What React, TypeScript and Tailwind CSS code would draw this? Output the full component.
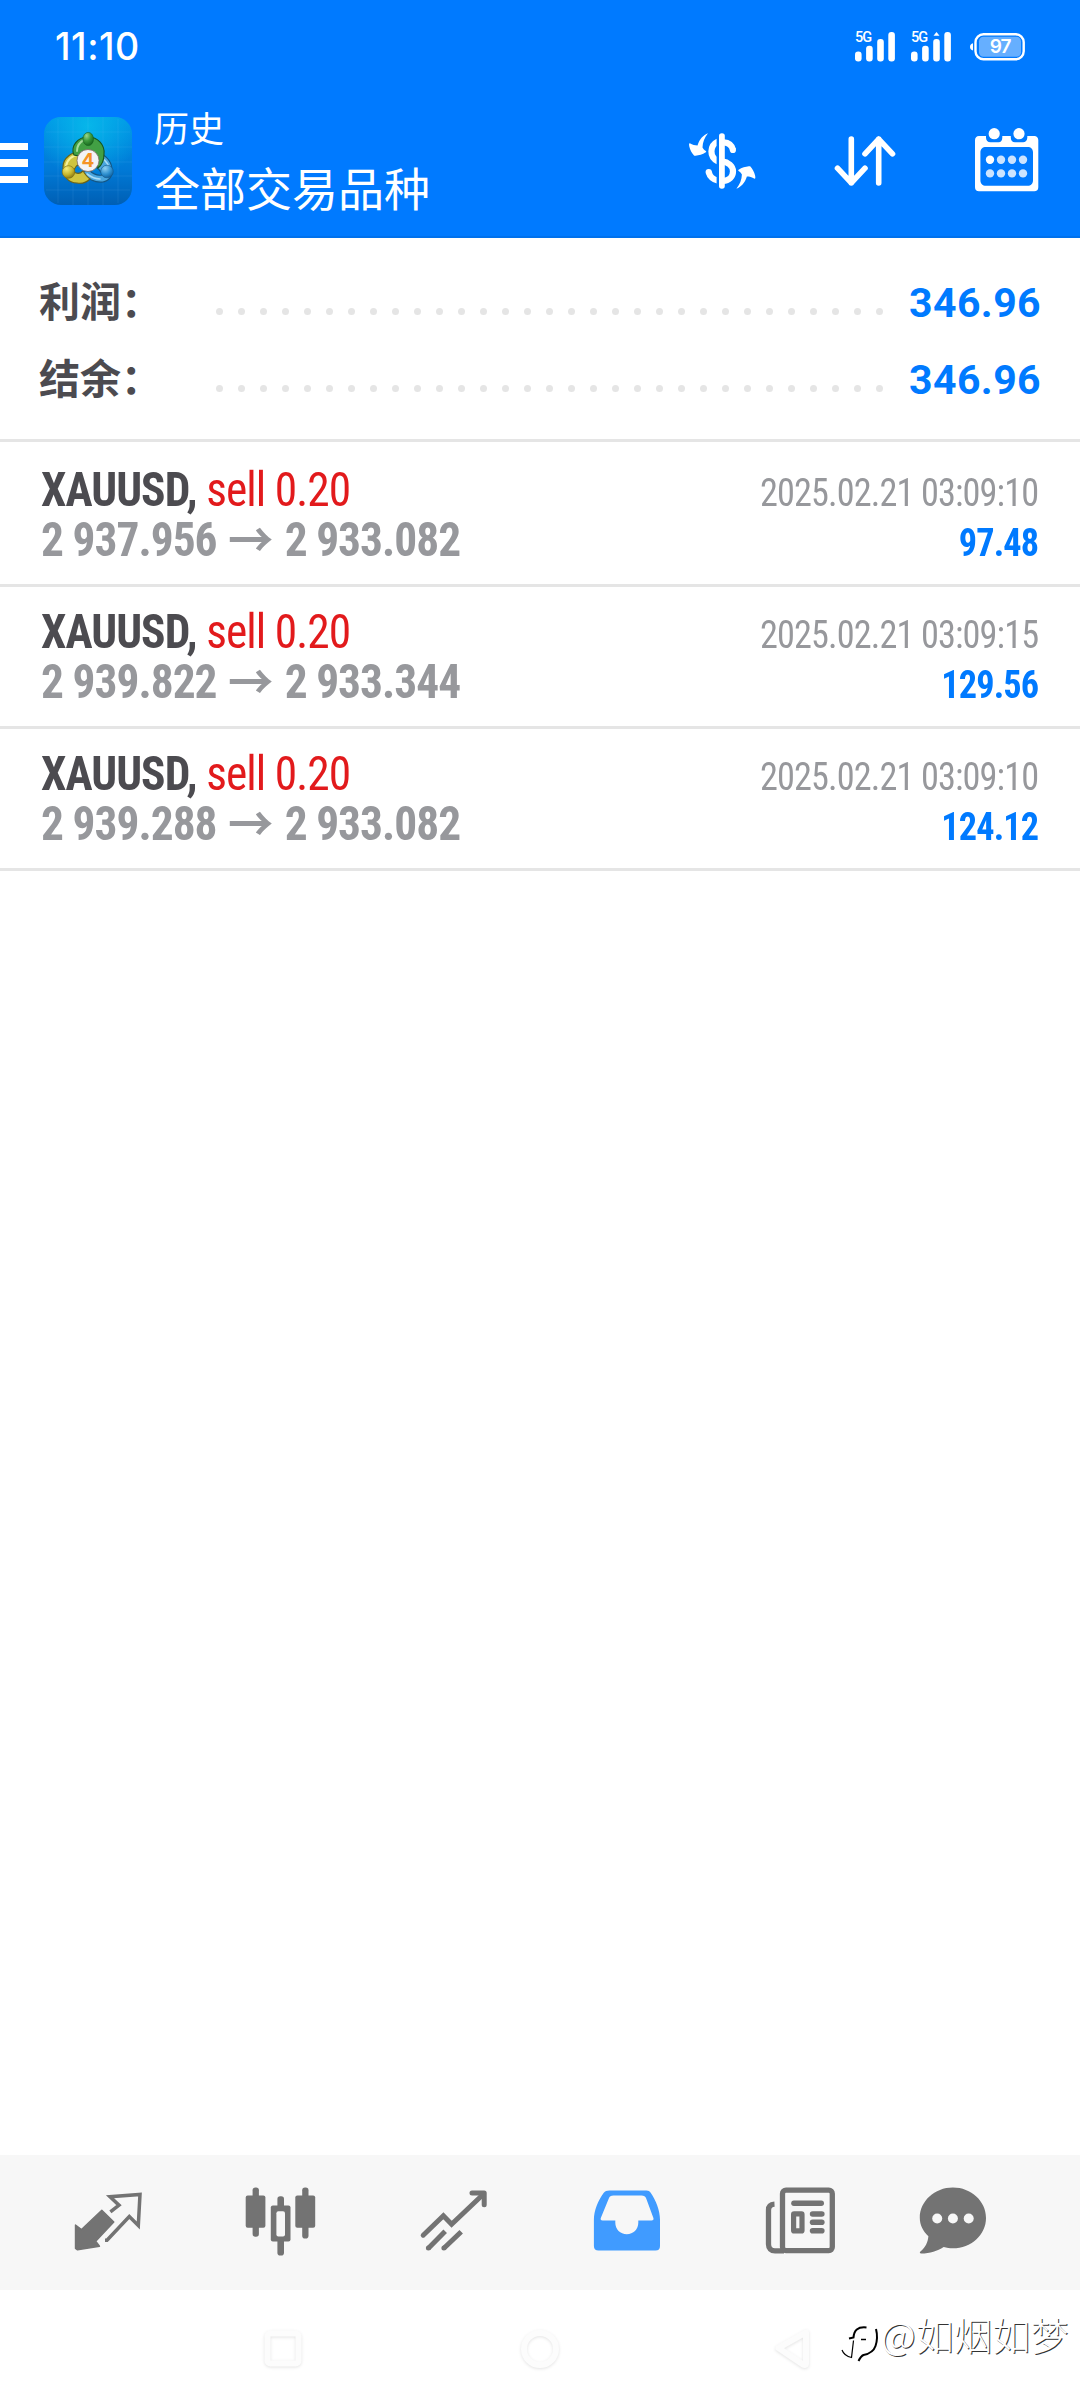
import type { ReactNode } from "react";

const summary = [
  { label: "利润：", value: "346.96" },
  { label: "结余：", value: "346.96" },
];

const deals = [
  {
    symbol: "XAUUSD",
    side: "sell 0.20",
    open: "2 937.956",
    close: "2 933.082",
    time: "2025.02.21 03:09:10",
    profit: "97.48",
  },
  {
    symbol: "XAUUSD",
    side: "sell 0.20",
    open: "2 939.822",
    close: "2 933.344",
    time: "2025.02.21 03:09:15",
    profit: "129.56",
  },
  {
    symbol: "XAUUSD",
    side: "sell 0.20",
    open: "2 939.288",
    close: "2 933.082",
    time: "2025.02.21 03:09:10",
    profit: "124.12",
  },
];

function Signal({ active = false }: { active?: boolean }) {
  return (
    <div className="relative w-10 h-[30px]">
      <svg viewBox="0 0 40 30" className="w-10 h-[30px]" fill="#fff">
        <rect x="0" y="19.5" width="6.6" height="10" rx="3.2" />
        <rect x="11.1" y="13.7" width="6.6" height="15.8" rx="3" />
        <rect x="22.2" y="7" width="6.6" height="22.5" rx="3" />
        <rect x="33.3" y="0" width="6.6" height="29.5" rx="3" />
        {active && <path d="M25.5 0l3 3.8h-6z" />}
      </svg>
      <span className="absolute left-0 -top-[3px] text-[14.5px] leading-[18px] font-medium tracking-[-1px] font-['Roboto']">
        5G
      </span>
    </div>
  );
}

function Battery() {
  return (
    <div className="relative w-[56px] h-7">
      <svg viewBox="0 0 56 28" className="w-[56px] h-7">
        <path d="M3 10.3v7.2C1.2 17 0 16 0 14s1.2-3.2 3-3.7z" fill="#fff" />
        <rect x="5.5" y="1.3" width="48.2" height="25" rx="8" fill="none" stroke="#fff" strokeWidth="2.4" />
        <rect x="9" y="3.8" width="42" height="20" rx="4.5" fill="#fff" fillOpacity="0.4" />
      </svg>
      <span className="absolute left-[2px] top-0 w-full text-center text-[19px] leading-7 font-semibold tracking-[-1px]">
        97
      </span>
    </div>
  );
}

function AppLogo() {
  return (
    <svg viewBox="0 0 88 88" className="w-[88px] h-[88px]">
      <defs>
        <linearGradient id="bg" x1="0" y1="0" x2="0" y2="1">
          <stop offset="0" stopColor="#0096e6" />
          <stop offset="0.6" stopColor="#0079d6" />
          <stop offset="1" stopColor="#005fb4" />
        </linearGradient>
        <radialGradient id="glow" cx="0.5" cy="0.1" r="0.6">
          <stop offset="0" stopColor="#06b6ea" />
          <stop offset="1" stopColor="#06b6ea" stopOpacity="0" />
        </radialGradient>
        <radialGradient id="green" cx="0.35" cy="0.25" r="0.8">
          <stop offset="0" stopColor="#9bd68c" />
          <stop offset="0.5" stopColor="#3c9a3d" />
          <stop offset="1" stopColor="#14651c" />
        </radialGradient>
        <radialGradient id="yellow" cx="0.35" cy="0.25" r="0.8">
          <stop offset="0" stopColor="#f5ee7a" />
          <stop offset="0.6" stopColor="#c5b42c" />
          <stop offset="1" stopColor="#857312" />
        </radialGradient>
        <radialGradient id="blue" cx="0.35" cy="0.25" r="0.8">
          <stop offset="0" stopColor="#8fd0f2" />
          <stop offset="0.6" stopColor="#2d8fcf" />
          <stop offset="1" stopColor="#0f5f9c" />
        </radialGradient>
      </defs>
      <rect width="88" height="88" rx="17" fill="url(#bg)" />
      <rect width="88" height="88" rx="17" fill="url(#glow)" />
      <path
        d="M14 2v84M29 0v88M44 0v88M59 0v88M74 2v84M2 15h84M0 30h88M0 45h88M0 59h88M2 73h84"
        stroke="#7fd0ff"
        strokeOpacity="0.14"
        strokeWidth="0.8"
      />
      {/* three figures holding the version badge */}
      <path d="M50 36c9-1 18 7 18 17 1 6-3 11-9 12-8 1-16-3-21-10l7-2c4 4 8 6 13 5-1-4-4-7-8-9z" fill="#4aa6de" stroke="#135583" strokeWidth="1.1" />
      <path d="M54 40c5 1 9 5 11 10M43 57c4 3 8 5 13 5" fill="none" stroke="#a9dcf6" strokeWidth="1.6" strokeLinecap="round" />
      <path d="M38 35c-10-1-19 6-19 15 0 9 5 16 14 16 5 1 10-1 13-4-3-2-5-5-7-8-3 3-6 3-9 1 0-5 4-8 9-10z" fill="#cfc43e" stroke="#6f6212" strokeWidth="1.1" />
      <path d="M35 38c-7 0-12 5-13 11" fill="none" stroke="#f6f09a" strokeWidth="2" strokeLinecap="round" />
      <path d="M30 38c-4-9 4-18 14-18s17 8 16 17c0 7-2 11-6 14l-2-8c1-5-2-10-8-10-5 0-8 2-9 6z" fill="#42a044" stroke="#17551d" strokeWidth="1.1" />
      <path d="M33 34c0-5 3-9 7-11" fill="none" stroke="#a5dc9c" strokeWidth="2" strokeLinecap="round" />
      <ellipse cx="44.2" cy="22" rx="5.3" ry="6.6" fill="url(#green)" stroke="#17601f" strokeWidth="0.6" />
      <circle cx="24.5" cy="55" r="6.3" fill="url(#yellow)" stroke="#7a6c14" strokeWidth="0.6" />
      <circle cx="63" cy="54.5" r="6.3" fill="url(#blue)" stroke="#14588a" strokeWidth="0.6" />
      <circle cx="44" cy="43.5" r="11" fill="#f3f3f5" stroke="#7f6a62" strokeWidth="0.8" />
      <text x="44" y="50.2" textAnchor="middle" className="font-['Inter'] text-[19px] font-bold" fill="#f59324">
        4
      </text>
    </svg>
  );
}

function CurrencyIcon() {
  return (
    <svg viewBox="0 0 76 76" className="w-[76px] h-[76px]">
      <g fill="none" stroke="#fff" strokeWidth="6.2">
        <path d="M34 17.500c-8.500 4-9 15.500 0 20" />
        <path d="M34 56.600C29.500 56 25.700 52.500 24.700 48" />
        <path d="M40 18.300c4.500 0.200 8 3 9 7.500" />
        <path d="M38 37.300c6 0.700 11 4.500 11 10s-4 9.500-10 9.700" />
      </g>
      <circle cx="24.7" cy="48" r="3.1" fill="#fff" />
      <circle cx="48.9" cy="26" r="3.1" fill="#fff" />
      <rect x="32.6" y="9.3" width="4" height="55.5" fill="#007aff" />
      <rect x="35" y="9.3" width="5.8" height="55.5" rx="2.8" fill="#fff" />
      <path
        id="swoosh"
        d="M24 9.300C19.500 11 15.500 15 13.500 21.500 11 21.500 8.500 21 5.800 19.300c-1 0-.8 1.500-.5 3.200.8 3.500 2.500 6.500 4.700 9 .5.500 1 .4 1.600.2 3.200-.5 7-1 10.200-3.500.5-.5.500-1 0-1.300-1.500-1-2.500-1.800-3.300-3.500.2-5 2-10 5.500-14.100z"
        fill="#fff"
      />
      <use href="#swoosh" transform="rotate(180 38.2 37)" />
    </svg>
  );
}

function SortIcon() {
  return (
    <svg
      viewBox="0 0 76 76"
      className="w-[76px] h-[76px]"
      fill="none"
      stroke="#fff"
      strokeWidth="5.6"
      strokeLinecap="round"
      strokeLinejoin="round"
    >
      <path d="M24.300 15v44M10.500 44.200l13.800 14.600 13.700-14.600" />
      <path d="M51.700 59V15M38 29.800l13.700-14.600 13.800 14.600" />
    </svg>
  );
}

function CalendarIcon() {
  return (
    <svg viewBox="0 0 76 76" className="w-[76px] h-[76px]" fill="#fff">
      <path
        fillRule="evenodd"
        d="M10 14h7v1.500c0 3 1.700 4.700 4.500 4.700h8c2.500 0 3.800-1.700 3.800-4.700V14h8.500v1.500c0 3 1.500 4.700 4.200 4.700h8c2.500 0 4.300-1.700 4.300-4.700V14h7c2.500 0 4 1.800 4 4.300v47c0 2.500-1.500 4-4 4H10c-2.500 0-4-1.500-4-4v-47C6 15.800 7.500 14 10 14zM17 25c-3.500 0-5.600 2-5.600 5.500v27.700c0 3.500 2.100 5.500 5.600 5.500h41.500c3.500 0 5.500-2 5.500-5.500V30.500c0-3.500-2-5.500-5.500-5.500z"
      />
      <circle cx="25.2" cy="11.7" r="5.6" />
      <circle cx="50" cy="11.7" r="5.6" />
      <circle cx="21" cy="37.7" r="4.2" />
      <g fillOpacity="0.8">
        <circle cx="32" cy="37.7" r="4.2" />
        <circle cx="43" cy="37.7" r="4.2" />
        <circle cx="54" cy="37.7" r="4.2" />
        <circle cx="21" cy="51.4" r="4.2" />
        <circle cx="32" cy="51.4" r="4.2" />
        <circle cx="43" cy="51.4" r="4.2" />
        <circle cx="54" cy="51.4" r="4.2" />
      </g>
    </svg>
  );
}

function NavIcon({ children }: { children: ReactNode }) {
  return (
    <svg viewBox="0 0 72 72" className="w-[72px] h-[72px]" fill="#737373">
      {children}
    </svg>
  );
}

function QuotesIcon() {
  return (
    <NavIcon>
      <path
        d="M3.500 39l6 4.600L29.800 24.200 41.800 36 23.700 55.200l3.800 5L5.500 63.800 3.500 62.500z"
        stroke="#737373"
        strokeWidth="1.4"
        strokeLinejoin="round"
      />
      <path
        d="M38.400 25.800l8.600-6.600-9-8.400 30-2.400-1.700 31.100-9-9L35 54.200h-2"
        fill="none"
        stroke="#737373"
        strokeWidth="3.5"
      />
    </NavIcon>
  );
}

function CandlesIcon() {
  return (
    <NavIcon>
      <rect x="7.6" y="1.5" width="6.3" height="49.3" rx="2.8" />
      <rect x="0.7" y="9.5" width="19.7" height="32.3" rx="2" />
      <rect x="32.4" y="10.2" width="6.6" height="59.3" rx="2.8" />
      <rect x="25.8" y="19.5" width="19.7" height="36" rx="2" />
      <rect x="31.4" y="25.2" width="8.6" height="25.3" rx="2" fill="#f7f7f7" />
      <rect x="57.2" y="1.5" width="6.3" height="51" rx="2.8" />
      <rect x="50.3" y="9.5" width="19.9" height="32.3" rx="2" />
    </NavIcon>
  );
}

function TradeIcon() {
  return (
    <NavIcon>
      <g fill="none" stroke="#737373" strokeWidth="5" strokeLinecap="round">
        <path d="M5.200 49.200L25.400 29.800l8.200 8.400L65 8.500" />
        <path d="M54 7h12.200v11.700" strokeLinejoin="round" />
      </g>
      <g fill="none" stroke="#737373" strokeWidth="5">
        <path d="M10.400 62.300l16.800-17M25.900 62.300l17.300-16.600" />
      </g>
      <circle cx="10.4" cy="62" r="2.5" />
      <circle cx="25.9" cy="62" r="2.5" />
    </NavIcon>
  );
}

function HistoryIcon() {
  return (
    <NavIcon>
      <path
        fill="#409bff"
        fillRule="evenodd"
        d="M18.500 4.500h37c2 0 3 .8 4.200 2.300C65 14.500 69 25 69 33.500V60c0 3-1.500 4.500-4.500 4.500h-57c-3 0-4.600-1.500-4.600-4.500V33.500C2.900 25 7 14.500 12.800 6.800 14.200 5.200 15.500 4.500 18.500 4.500zM22.500 9.500c-2.800 0-3.800.8-4.700 3L9.800 32c-.5 1.500 0 2.500 1.800 2.500h12.700v2.300c0 6.500 5 11.400 11.500 11.400s11.500-4.900 11.500-11.400v-2.300h13.200c1.800 0 2.400-1 1.900-2.500l-7.200-19.500c-.9-2.200-2.200-3-4.700-3z"
      />
    </NavIcon>
  );
}

function NewsIcon() {
  return (
    <NavIcon>
      <rect x="18.5" y="4.2" width="49.8" height="60.4" rx="3.5" fill="none" stroke="#737373" strokeWidth="5.3" />
      <path d="M10.500 18.200c-4 .2-6 2-6 6v34c0 4.200 2.500 6.600 6.500 6.600h9" fill="none" stroke="#737373" strokeWidth="5.3" />
      <rect x="27.2" y="14.5" width="32.8" height="5.4" rx="2.7" />
      <rect x="29.6" y="27.9" width="8.4" height="17" rx="0.5" fill="none" stroke="#737373" strokeWidth="5.2" strokeLinejoin="round" />
      <rect x="45.8" y="25.2" width="14.8" height="5.6" rx="2.8" />
      <rect x="45.8" y="33.5" width="14.8" height="5.6" rx="2.8" />
      <rect x="45.8" y="41.9" width="14.8" height="5.6" rx="2.8" />
    </NavIcon>
  );
}

function ChatIcon() {
  return (
    <NavIcon>
      <path d="M35.900 1.500c18.300 0 33.100 13.600 33.100 30.400S54.200 62.300 35.900 62.300c-3.200 0-6.200-.4-9.200-1.300-6.500 4-13.500 6.500-22.500 6.500-1.400 0-1.800-1-.8-2 5-4 7.400-9 8-15.300C6 45 2.800 39 2.800 31.900 2.800 15.100 17.600 1.500 35.900 1.500z" />
      <g fill="#f7f7f7">
        <circle cx="20.2" cy="32.5" r="5" />
        <circle cx="35.9" cy="32.5" r="5" />
        <circle cx="51.7" cy="32.5" r="5" />
      </g>
    </NavIcon>
  );
}

function SystemKey({ children }: { children: ReactNode }) {
  return (
    <svg
      viewBox="0 0 50 50"
      className="w-[50px] h-[50px] drop-shadow-[0_1px_1.5px_rgba(0,0,0,0.11)]"
      fill="none"
      stroke="#fcfcfc"
      strokeWidth="6"
      strokeLinejoin="round"
    >
      {children}
    </svg>
  );
}

export default function App() {
  return (
    <div className="relative w-[1080px] h-[2400px] flex flex-col overflow-hidden bg-white font-['Roboto','Noto_Sans_CJK_SC',sans-serif]">
      {/* Status bar + header */}
      <header className="h-[238px] shrink-0 bg-[#007aff] border-b-2 border-[#0071ec] text-white">
        <div className="h-[93px] flex items-center pl-[55px] pr-[54px] font-['Inter',sans-serif]">
          <span className="mt-[2px] text-[37.5px] font-medium tracking-[0.5px]">11:10</span>
          <div className="ml-auto flex items-center gap-4">
            <Signal />
            <Signal active />
            <div className="pl-[3px]">
              <Battery />
            </div>
          </div>
        </div>

        <div className="h-[143px] flex items-start">
          <div className="w-7 mt-[49.5px] flex flex-col gap-[9px]">
            <span className="h-[7.6px] bg-white" />
            <span className="h-[7.6px] bg-white" />
            <span className="h-[7.6px] bg-white" />
          </div>
          <div className="ml-4 mt-6">
            <AppLogo />
          </div>
          <div className="ml-[22px] mt-[9px] font-['Noto_Sans_CJK_SC',sans-serif]">
            <p className="text-[35px] leading-[50px]">历史</p>
            <p className="mt-[3px] text-[46px] leading-[62px]">全部交易品种</p>
          </div>
          <div className="ml-auto mr-[35px] mt-[29px] flex items-start">
            <div className="mt-[2px]">
              <CurrencyIcon />
            </div>
            <div className="mt-[2px] ml-[67px]">
              <SortIcon />
            </div>
            <div className="ml-[66px]">
              <CalendarIcon />
            </div>
          </div>
        </div>
      </header>

      {/* Totals */}
      <section className="h-[204px] shrink-0 pt-[25px] pl-[39px] pr-[39px] border-b-3 border-[#e5e5e5]">
        {summary.map(({ label, value }) => (
          <div key={label} className="h-[77px] flex items-center">
            <span className="w-[177px] -mt-[3px] font-['Noto_Sans_CJK_SC'] text-[41px] font-bold text-[#4c4b50]">
              {label}
            </span>
            <div className="mt-[20px] flex gap-[15px]">
              {Array.from({ length: 31 }, (_, i) => (
                <span key={i} className="w-[7px] h-[7px] rounded-full bg-[#e5e5e5]" />
              ))}
            </div>
            <span className="ml-auto mt-[4px] text-[41px] font-bold tracking-[0.4px] text-[#007aff]">
              {value}
            </span>
          </div>
        ))}
      </section>

      {/* Closed deals */}
      <main className="flex-1 pt-[3px] font-['Roboto_Condensed','Noto_Sans_CJK_SC',sans-serif]">
        {deals.map(({ symbol, side, open, close, time, profit }) => (
          <div
            key={open}
            className="h-[142px] flex justify-between pt-[20px] pl-[41px] pr-[42px] border-b-3 border-[#e5e5e5]"
          >
            <div className="origin-left scale-x-[0.945] text-[48px] leading-[50px] tracking-[-1px] whitespace-nowrap">
              <p className="h-[50px]">
                <span className="font-bold text-[#4c4b50]">{symbol}, </span>
                <span className="text-[#e21a1c]">{side}</span>
              </p>
              <p className="h-[50px] flex gap-[12px] font-bold text-[#97989c]">
                <span>{open}</span>
                <span className="-mt-[4px] font-['Noto_Sans_CJK_SC'] tracking-normal">→</span>
                <span>{close}</span>
              </p>
            </div>
            <div className="origin-right scale-x-[0.93] pt-[3px] text-right text-[39px] leading-[50px] tracking-[-0.95px] whitespace-nowrap">
              <p className="text-[#97989c]">{time}</p>
              <p className="font-bold text-[#007aff]">{profit}</p>
            </div>
          </div>
        ))}
      </main>

      {/* Tab bar */}
      <nav className="h-[135px] shrink-0 pl-[21.5px] pb-px flex bg-[#f7f7f7]">
        <div className="w-[173px] flex items-center justify-center"><QuotesIcon /></div>
        <div className="w-[173px] flex items-center justify-center"><CandlesIcon /></div>
        <div className="w-[173px] flex items-center justify-center"><TradeIcon /></div>
        <div className="w-[173px] flex items-center justify-center"><HistoryIcon /></div>
        <div className="w-[173px] flex items-center justify-center"><NewsIcon /></div>
        <div className="w-[132px] flex items-center justify-center"><ChatIcon /></div>
      </nav>

      {/* System navigation */}
      <footer className="h-[110px] shrink-0 pt-[34px] pl-[258px] flex items-start">
        <SystemKey>
          <rect x="9.5" y="9.5" width="31" height="30" rx="3" />
        </SystemKey>
        <div className="ml-[207px]">
          <SystemKey>
            <circle cx="25" cy="25" r="16" />
          </SystemKey>
        </div>
        <div className="ml-[203px]">
          <SystemKey>
            <path d="M10.500 24L38 8.500v31c0 1.500-1.500 2-3 1z" />
          </SystemKey>
        </div>
      </footer>

      {/* Watermark */}
      <div className="absolute left-[841px] top-[2311px] flex items-start text-white font-['Noto_Sans_CJK_SC',sans-serif]">
        <svg viewBox="0 0 40 56" className="w-10 h-14" fill="none" stroke="#000">
          <path d="M8 27.500l4.500-1c.5-7 4-11 13-10" strokeWidth="2" />
          <path d="M20 28.500h5" strokeWidth="1.5" />
          <path d="M1 39c1.500 4 4.500 6.500 9.500 7.500l2-17" strokeWidth="1.2" />
          <path d="M35 18c1.500 6 1.200 12-.5 17-2 6-7 8-12 9-2.500 1-3.500 3-5 6" strokeWidth="2" />
        </svg>
        <span className="-mt-[5px] text-[38px] leading-[56px] font-light tracking-[0.2px] whitespace-nowrap [text-shadow:1px_1px_0_#333]">
          @如烟如梦
        </span>
      </div>
    </div>
  );
}
